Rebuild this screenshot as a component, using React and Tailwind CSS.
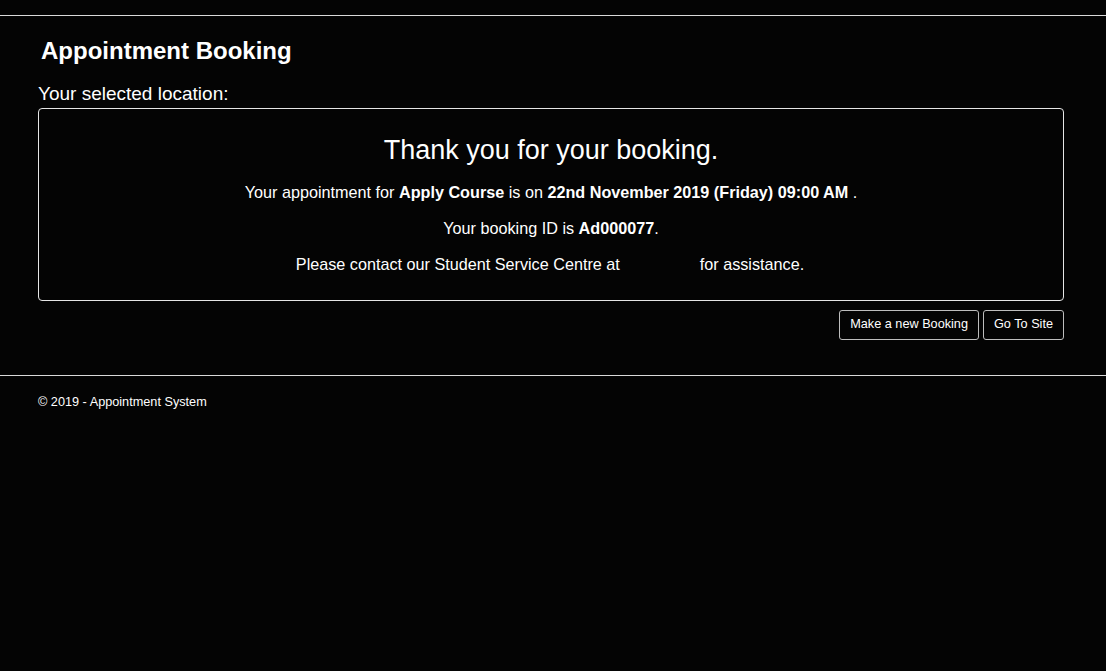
import React from "react";

const font = { fontFamily: '"Liberation Sans", Arial, sans-serif' };

const App = () => {
  return (
    <div
      className="min-h-screen w-full bg-[#040404] text-white font-['Liberation_Sans',Arial,sans-serif]"
      style={font}
    >
      <div className="h-[15px]" />
      <hr className="border-0 border-t border-[#d9d9d9]" />

      {/* Main */}
      <div className="w-[1026px] ml-[38px]">
        <h2 className="mt-[21px] ml-[3px] text-[24px] leading-[28px] font-bold">
          Appointment Booking
        </h2>

        <p className="mt-[18px] text-[19px] leading-[22px]">
          Your selected location:
        </p>

        <div className="mt-[3px] h-[193px] rounded-[4px] border border-[#e6e6e6] pt-[26px] text-center">
          <h3 className="text-[27px] leading-[30px]">
            Thank you for your booking.
          </h3>
          <p className="mt-[18px] text-[16.2px] leading-[18px]">
            Your appointment for <b>Apply Course</b> is on{" "}
            <b>22nd November 2019 (Friday) 09:00 AM</b> .
          </p>
          <p className="mt-[18px] text-[16.2px] leading-[18px]">
            Your booking ID is <b>Ad000077</b>.
          </p>
          <p className="mt-[18px] text-[16.2px] leading-[18px] pr-[2px]">
            Please contact our Student Service Centre at{" "}
            <span className="inline-block w-[71px]" /> for assistance.
          </p>
        </div>

        <div className="mt-[9px] flex justify-end gap-[4px]">
          <button className="h-[30px] rounded-[3px] border border-[#bdbdbd] px-[10px] text-[12.7px] text-white">
            Make a new Booking
          </button>
          <button className="h-[30px] rounded-[3px] border border-[#bdbdbd] px-[10px] text-[12.7px] text-white">
            Go To Site
          </button>
        </div>
      </div>

      <hr className="mt-[35px] border-0 border-t border-[#d9d9d9]" />

      <footer className="ml-[38px] mt-[19px] text-[12.7px] leading-[14px]">
        © 2019 - Appointment System
      </footer>
    </div>
  );
};

export default App;
